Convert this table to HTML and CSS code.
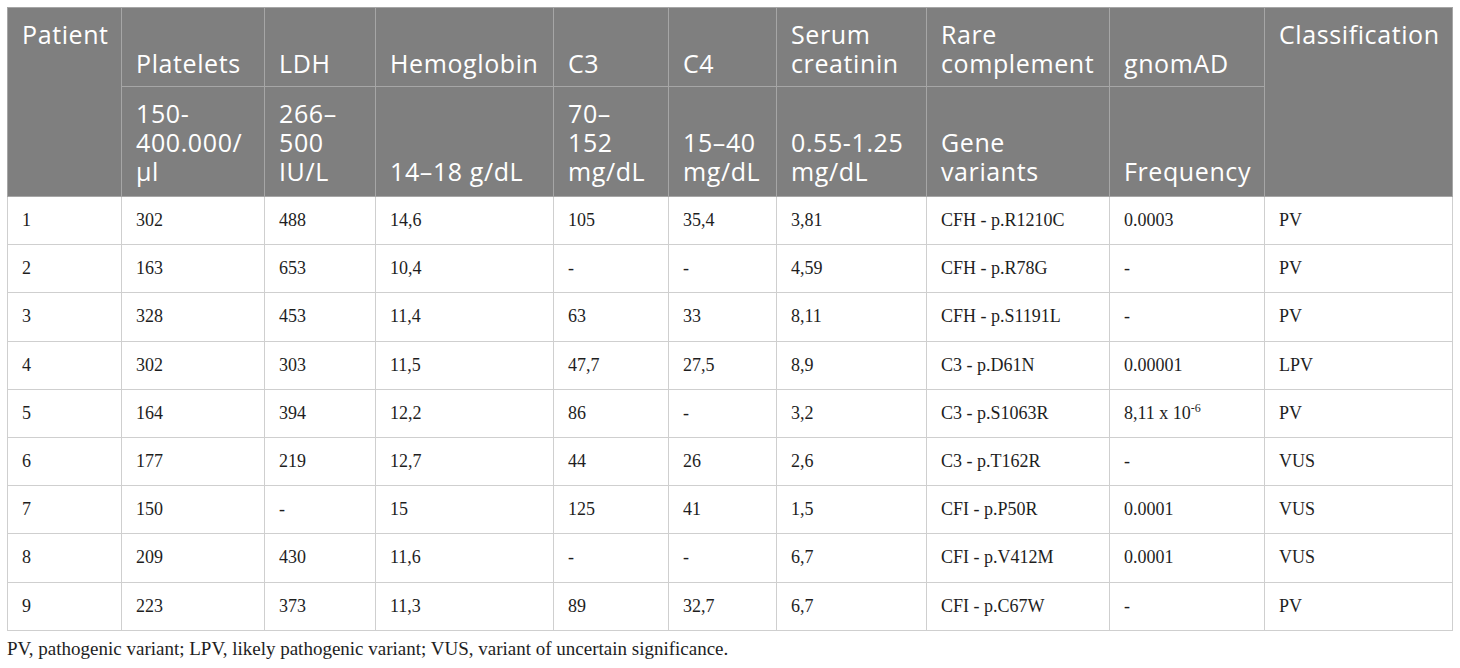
FILE: index.html
```html
<!DOCTYPE html>
<html lang="en">
<head>
    <meta charset="UTF-8">
    <meta name="viewport" content="width=device-width, initial-scale=1.0">
    <title>Patient complement variants</title>
    <link rel="stylesheet" href="styles.css">
</head>
<body>
    <main class="table-wrap">
        <table class="data-table">
            <colgroup>
                <col style="width: 114px">
                <col style="width: 143px">
                <col style="width: 111px">
                <col style="width: 178px">
                <col style="width: 115px">
                <col style="width: 108px">
                <col style="width: 150px">
                <col style="width: 183px">
                <col style="width: 155px">
                <col style="width: 188px">
            </colgroup>
            <thead>
                <tr class="head-top">
                    <th rowspan="2" class="top-cell">Patient</th>
                    <th>Platelets</th>
                    <th>LDH</th>
                    <th>Hemoglobin</th>
                    <th>C3</th>
                    <th>C4</th>
                    <th>Serum<br>creatinin</th>
                    <th>Rare<br>complement</th>
                    <th>gnomAD</th>
                    <th rowspan="2" class="top-cell">Classification</th>
                </tr>
                <tr class="head-units">
                    <th>150-<br>400.000/<br>µl</th>
                    <th>266–<br>500<br>IU/L</th>
                    <th>14–18 g/dL</th>
                    <th>70–<br>152<br>mg/dL</th>
                    <th>15–40<br>mg/dL</th>
                    <th>0.55-1.25<br>mg/dL</th>
                    <th>Gene<br>variants</th>
                    <th>Frequency</th>
                </tr>
            </thead>
            <tbody>
                <tr><td>1</td><td>302</td><td>488</td><td>14,6</td><td>105</td><td>35,4</td><td>3,81</td><td>CFH - p.R1210C</td><td>0.0003</td><td>PV</td></tr>
                <tr><td>2</td><td>163</td><td>653</td><td>10,4</td><td>-</td><td>-</td><td>4,59</td><td>CFH - p.R78G</td><td>-</td><td>PV</td></tr>
                <tr><td>3</td><td>328</td><td>453</td><td>11,4</td><td>63</td><td>33</td><td>8,11</td><td>CFH - p.S1191L</td><td>-</td><td>PV</td></tr>
                <tr><td>4</td><td>302</td><td>303</td><td>11,5</td><td>47,7</td><td>27,5</td><td>8,9</td><td>C3 - p.D61N</td><td>0.00001</td><td>LPV</td></tr>
                <tr><td>5</td><td>164</td><td>394</td><td>12,2</td><td>86</td><td>-</td><td>3,2</td><td>C3 - p.S1063R</td><td>8,11 x 10<sup>-6</sup></td><td>PV</td></tr>
                <tr><td>6</td><td>177</td><td>219</td><td>12,7</td><td>44</td><td>26</td><td>2,6</td><td>C3 - p.T162R</td><td>-</td><td>VUS</td></tr>
                <tr><td>7</td><td>150</td><td>-</td><td>15</td><td>125</td><td>41</td><td>1,5</td><td>CFI - p.P50R</td><td>0.0001</td><td>VUS</td></tr>
                <tr><td>8</td><td>209</td><td>430</td><td>11,6</td><td>-</td><td>-</td><td>6,7</td><td>CFI - p.V412M</td><td>0.0001</td><td>VUS</td></tr>
                <tr><td>9</td><td>223</td><td>373</td><td>11,3</td><td>89</td><td>32,7</td><td>6,7</td><td>CFI - p.C67W</td><td>-</td><td>PV</td></tr>
            </tbody>
        </table>
        <p class="footnote">PV, pathogenic variant; LPV, likely pathogenic variant; VUS, variant of uncertain significance.</p>
    </main>
</body>
</html>
```

FILE: styles.css
```css
body {
    margin: 0;
    padding: 7px 8px 0 7px;
    background-color: #ffffff;
    color: #1e1e1e;
    font-family: 'Liberation Serif', 'Times New Roman', serif;
}

.data-table {
    width: 100%;
    border-collapse: collapse;
    table-layout: fixed;
    border: 1px solid #cfcfcf;
}

.data-table th {
    background-color: #7f7f7f;
    color: #ffffff;
    font-family: 'Open Sans', 'Noto Sans', sans-serif;
    font-weight: normal;
    font-size: 25px;
    letter-spacing: 0.6px;
    line-height: 29px;
    text-align: left;
    vertical-align: bottom;
    border: 1px solid #a6a6a6;
    white-space: nowrap;
}

.head-top th {
    height: 58px;
    padding: 12px 10px 8px 14px;
}

.head-units th {
    height: 87px;
    padding: 12px 10px 10px 14px;
}

.data-table th.top-cell {
    vertical-align: top;
}

.data-table td {
    height: 47.2px;
    padding: 0 14px;
    font-size: 18px;
    border: 1px solid #cfcfcf;
    vertical-align: middle;
}

.data-table sup {
    font-size: 12px;
    line-height: 0;
}

.footnote {
    margin: 7px 0 0;
    font-size: 19px;
}
```
